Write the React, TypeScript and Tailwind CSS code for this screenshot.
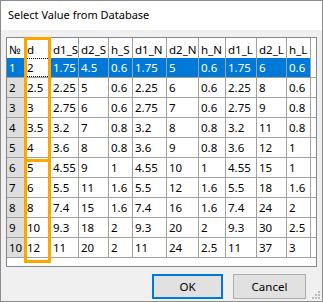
const cols = ['d', 'd1_S', 'd2_S', 'h_S', 'd1_N', 'd2_N', 'h_N', 'd1_L', 'd2_L', 'h_L'];

const rows = [
  ['2', '1.75', '4.5', '0.6', '1.75', '5', '0.6', '1.75', '6', '0.6'],
  ['2.5', '2.25', '5', '0.6', '2.25', '6', '0.6', '2.25', '8', '0.6'],
  ['3', '2.75', '6', '0.6', '2.75', '7', '0.6', '2.75', '9', '0.8'],
  ['3.5', '3.2', '7', '0.8', '3.2', '8', '0.8', '3.2', '11', '0.8'],
  ['4', '3.6', '8', '0.8', '3.6', '9', '0.8', '3.6', '12', '1'],
  ['5', '4.55', '9', '1', '4.55', '10', '1', '4.55', '15', '1'],
  ['6', '5.5', '11', '1.6', '5.5', '12', '1.6', '5.5', '18', '1.6'],
  ['8', '7.4', '15', '1.6', '7.4', '16', '1.6', '7.4', '24', '2'],
  ['10', '9.3', '18', '2', '9.3', '20', '2', '9.3', '30', '2.5'],
  ['12', '11', '20', '2', '11', '24', '2.5', '11', '37', '3'],
];

const SizeGrip = () => (
  <svg className="absolute right-[2px] bottom-[2px]" width="10" height="10" viewBox="0 0 10 10">
    {[
      [8, 2],
      [5, 5],
      [8, 5],
      [2, 8],
      [5, 8],
      [8, 8],
    ].map(([x, y], i) => (
      <rect key={i} x={x} y={y} width="2" height="2" fill="#bcbcbc" />
    ))}
  </svg>
);

export default function App() {
  return (
    <div
      className="relative w-[323px] h-[302px] border border-[#8c8c8c] bg-[#f0f0f0] flex flex-col text-[11.5px] text-black"
      style={{ fontFamily: '"Noto Sans", "Liberation Sans", sans-serif' }}
    >
      {/* title bar */}
      <div className="h-[29px] bg-white flex items-center pl-[7px] text-[11px]">Select Value from Database</div>

      {/* data grid */}
      <div className="pl-[5px] pt-[7px]">
        <div className="relative w-[311px] h-[230px] border border-[#828790] bg-white">
          <div className="grid grid-cols-[17px_25px_27px_29px_23px_33px_31px_26px_30px_29px_23px_5px] auto-rows-[19px] gap-px bg-[#a0a0a0] border-b border-[#a0a0a0]">
            {/* header */}
            <div className="h-[23px] bg-white pl-[2px] flex items-center">№</div>
            {cols.map((c) => (
              <div key={c} className="h-[23px] bg-white pl-[2px] flex items-center">
                {c}
              </div>
            ))}
            <div className="h-[23px] bg-white" />

            {rows.map((r, i) => {
              const sel = i === 0;
              return [
                <div
                  key={`h${i}`}
                  className={`pl-[2px] flex items-center ${sel ? 'bg-[#0078d7] text-white' : 'bg-[#dddddd]'}`}
                >
                  {i + 1}
                </div>,
                ...r.map((v, j) =>
                  sel && j === 0 ? (
                    <div key={`${i}-${j}`} className="bg-white flex items-center pl-[1px] border border-dotted border-black">
                      {v}
                    </div>
                  ) : (
                    <div
                      key={`${i}-${j}`}
                      className={`pl-[2px] flex items-center ${sel ? 'bg-[#0078d7] text-white' : 'bg-white'}`}
                    >
                      {v}
                    </div>
                  ),
                ),
                <div key={`f${i}`} className="bg-white" />,
              ];
            })}
          </div>

          {/* highlight on column d */}
          <div className="absolute left-[17px] top-[-1px] w-[27px] h-[226px] border-[3px] border-[#ffa500]">
            <div className="absolute left-0 right-0 top-[119px] h-[3px] bg-[#ffa500]" />
          </div>
        </div>
      </div>

      {/* buttons */}
      <div className="flex justify-end gap-[10px] pr-[16px] mt-[7px]">
        <button className="w-[71px] h-[25px] bg-[#e1e1e1] border-2 border-[#0078d7]">OK</button>
        <button className="w-[73px] h-[25px] bg-[#e1e1e1] border border-[#adadad]">Cancel</button>
      </div>

      <SizeGrip />
    </div>
  );
}
